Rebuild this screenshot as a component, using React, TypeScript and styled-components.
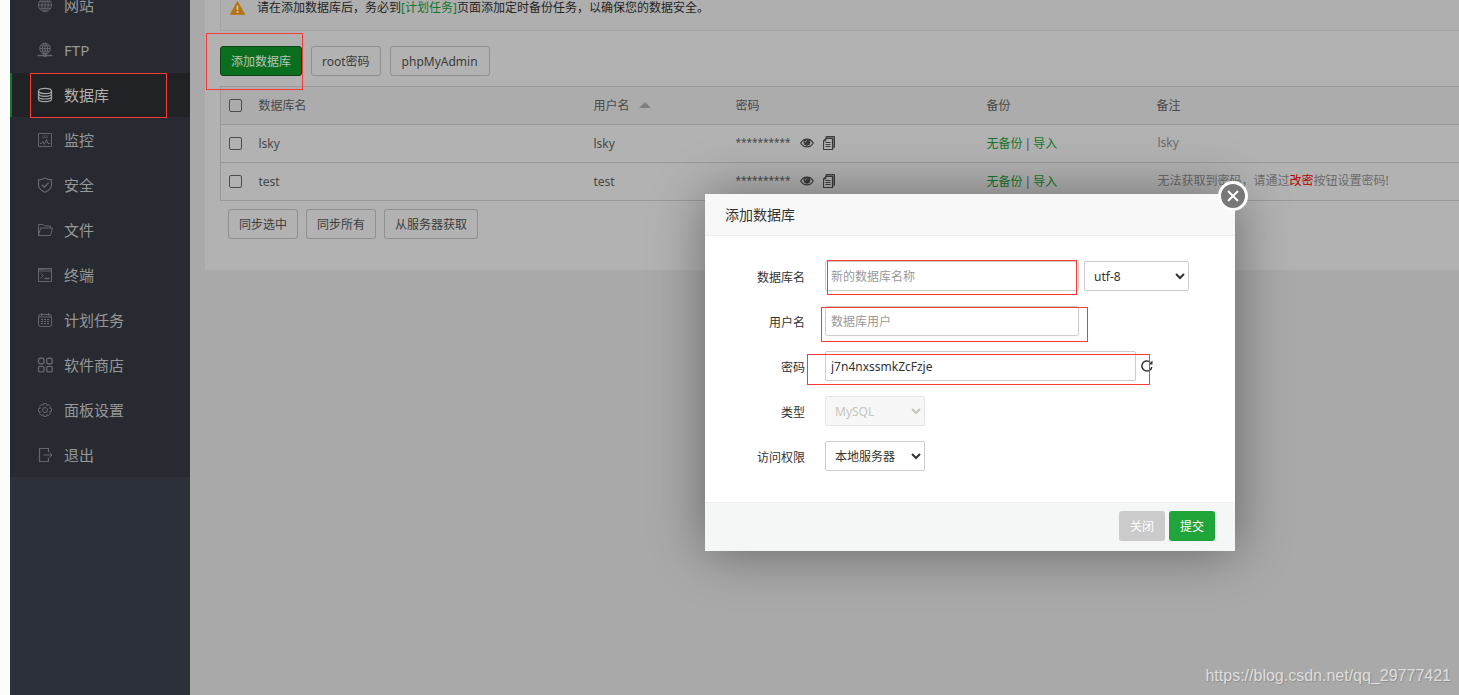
import React from 'react';
import styled, { createGlobalStyle, css } from 'styled-components';

const latinFirst = '"Noto Sans", "Noto Sans CJK SC", sans-serif';

const GlobalStyle = createGlobalStyle`
  * { box-sizing: border-box; }
  body {
    margin: 0;
    background: #fcfcfc;
    color: #484848;
    font: 12px/20px ${latinFirst};
  }
  button, input, select { font: inherit; }
  a { text-decoration: none; }
`;

const Page = styled.div`
  position: relative;
  display: flex;
  min-height: 100vh;
  margin-left: 10px;
  background: #a9a9a9;
  overflow: hidden;
`;

const Sidebar = styled.nav`
  flex: 0 0 180px;
  background: #2c3038;
`;

/* The page is scrolled, so the first entry is cut by the top of the window. */
const Menu = styled.ul`
  display: flex;
  flex-direction: column;
  gap: 1px;
  margin: -17px 0 0;
  padding: 0;
  list-style: none;
  background: #272b31;
`;

const MenuItem = styled.li`
  position: relative;
`;

const MenuLink = styled.a<{ $active?: boolean }>`
  display: flex;
  align-items: center;
  gap: 11px;
  height: 44px;
  padding-left: 25px;
  border-left: 2px solid transparent;
  color: #969798;
  font-size: 15px;
  svg { width: 16px; height: 16px; color: #63666a; }
  ${(p) => p.$active && css`
    border-left-color: #14782a;
    background: #202226;
    color: #b3b3b3;
    svg { color: #a6a7a8; }
  `}
`;

/* Red frame laid over a control to point it out. */
const Mark = styled.span<{ $inset: string }>`
  position: absolute;
  inset: ${(p) => p.$inset};
  border: 1px solid #f93a37;
  pointer-events: none;
`;

const Main = styled.main`
  flex: 1;
  min-width: 0;
  padding-left: 15px;
`;

const Panel = styled.section`
  padding: 0 0 31px 15px;
  background: #b2b2b2;
`;

const Notice = styled.div`
  display: flex;
  align-items: center;
  gap: 12px;
  height: 46px;
  margin-top: -15px;
  padding-left: 9px;
  border: 1px solid #a5a5a5;
  border-right: 0;
  background: #afafaf;
  color: #242424;
  p { margin: 0; }
`;

const GreenLink = styled.a`
  color: #14752a;
`;

const ButtonRow = styled.div<{ $indent?: boolean }>`
  display: flex;
  gap: ${(p) => (p.$indent ? 8 : 9)}px;
  padding: ${(p) => (p.$indent ? '8px 0 0 8px' : '15px 0 10px')};
`;

const Anchor = styled.div`
  position: relative;
`;

const Button = styled.button<{ $primary?: boolean; $latin?: boolean }>`
  height: 30px;
  padding: 2px ${(p) => (p.$latin ? 11 : 10)}px 0;
  border: 1px solid ${(p) => (p.$primary ? '#0b4516' : '#8f8f8f')};
  border-radius: 3px;
  background: ${(p) => (p.$primary ? '#0b6e1e' : '#b2b2b2')};
  color: ${(p) => (p.$primary ? '#b8c5ba' : '#3c3c3c')};
  white-space: nowrap;
`;

const Table = styled.table`
  width: 100%;
  table-layout: fixed;
  border-collapse: collapse;
  border-left: 1px solid #999;
  text-align: left;
  tr { height: 38px; border-top: 1px solid #999; }
  tbody tr:last-child { border-bottom: 1px solid #999; }
  thead { background: #acacac; }
  th, td { padding: 0 8px; font-weight: 400; vertical-align: middle; }
`;

const Column = styled.col<{ $width?: number }>`
  width: ${(p) => (p.$width ? `${p.$width}px` : 'auto')};
`;

const Checkbox = styled.input`
  display: block;
  width: 13px;
  height: 13px;
  margin: 0;
  appearance: none;
  border: 1px solid #4c4c4c;
  border-radius: 2px;
`;

const SortMark = styled.span`
  display: inline-block;
  margin-left: 9px;
  border: 6px solid transparent;
  border-top: 0;
  border-bottom: 6px solid #808080;
  vertical-align: 2px;
`;

const Secret = styled.div`
  display: flex;
  align-items: center;
  padding-bottom: 2px;
  svg { color: #3c3c3c; }
`;

const Stars = styled.span`
  width: 64px;
  padding-bottom: 2px;
  font-size: 10px;
`;

const Separator = styled.span`
  margin: 0 2px;
  color: #3a4c5a;
`;

const IconButton = styled.button`
  display: flex;
  padding: 0;
  border: 0;
  background: none;
  color: #333;
`;

const CopyButton = styled(IconButton)`
  margin-left: 9px;
`;

const Remark = styled.div`
  padding: 0 0 2px 1px;
  color: #6b6b6b;
  a { color: #b80000; }
`;

const Dialog = styled.form`
  position: absolute;
  top: 194px;
  right: 224px;
  width: 530px;
  background: #fff;
  box-shadow: 1px 1px 50px rgba(0, 0, 0, 0.4);
  color: #333;
`;

const DialogTitle = styled.h2`
  height: 42px;
  margin: 0;
  padding-left: 20px;
  border-bottom: 1px solid #eee;
  background: #f8f8f8;
  font-size: 14px;
  font-weight: 400;
  line-height: 42px;
`;

const CloseButton = styled.button`
  position: absolute;
  top: -13px;
  right: -13px;
  display: grid;
  place-items: center;
  width: 30px;
  height: 30px;
  padding: 0;
  border: 3px solid #fff;
  border-radius: 50%;
  background: #787878;
  color: #fff;
`;

const Fields = styled.div`
  display: flex;
  flex-direction: column;
  gap: 15px;
  padding: 25px 0 31px;
`;

const Field = styled.div`
  display: flex;
  align-items: center;
  gap: 5px;
`;

const Label = styled.label`
  width: 100px;
  margin-right: 15px;
  padding-top: 4px;
  text-align: right;
`;

const Input = styled.input<{ $wide?: boolean }>`
  display: block;
  width: ${(p) => (p.$wide ? 311 : 254)}px;
  height: 30px;
  padding: 0 5px;
  border: 1px solid #ccc;
  border-radius: 2px;
  background: #fff;
  color: #333;
  outline: 0;
  &::placeholder { color: #999; opacity: 1; }
`;

const Select = styled.select<{ $wide?: boolean }>`
  width: ${(p) => (p.$wide ? 105 : 100)}px;
  height: 30px;
  padding: 0 0 0 5px;
  border: 1px solid #ccc;
  border-radius: 2px;
  background: #fff;
  color: #333;
  &:disabled { border-color: #e5e5e5; background: #f7f7f7; color: #c6c6bd; opacity: 1; }
`;

const DialogFooter = styled.footer`
  display: flex;
  justify-content: flex-end;
  gap: 4px;
  padding: 8px 20px 10px;
  border-top: 1px solid #edf0ee;
  background: #f5f7f6;
`;

const DialogButton = styled.button<{ $primary?: boolean }>`
  width: 46px;
  height: 30px;
  padding: 2px 0 0;
  border: 0;
  border-radius: 3px;
  background: ${(p) => (p.$primary ? '#20a53a' : '#cbcbcb')};
  color: #fff;
`;

const Watermark = styled.div`
  position: absolute;
  right: 8px;
  bottom: 9px;
  color: #dedede;
  font: 16px/20px "Liberation Sans", Arial, sans-serif;
  text-shadow: 1px 1px 1px #8c8c8c;
`;

const Icon = ({ children, size = 16 }: { children: React.ReactNode; size?: number }) => (
  <svg width={size} height={size} viewBox="0 0 16 16" fill="none" stroke="currentColor" aria-hidden="true">
    {children}
  </svg>
);

const menu = [
  { text: '网站', icon: <><circle cx="8" cy="8" r="6.5" /><ellipse cx="8" cy="8" rx="3.2" ry="6.5" /><path d="M8 1.5v13M1.5 8h13M2.5 4.7h11M2.5 11.3h11" /></> },
  { text: 'FTP', icon: <><circle cx="8" cy="6.5" r="5.3" /><ellipse cx="8" cy="6.5" rx="2.6" ry="5.3" /><path d="M8 1.2v12M2.7 6.5h10.6M3.5 3.9h9M3.5 9.1h9" /><path d="M.5 13.500h15" strokeWidth="1.500" /><path d="M6 13.500h4" strokeWidth="2.500" /></> },
  { text: '数据库', active: true, icon: <g strokeWidth="1.200"><ellipse cx="8" cy="4" rx="6.5" ry="2.6" /><path d="M1.5 4v8c0 1.4 2.9 2.6 6.5 2.6s6.5-1.2 6.5-2.6V4M1.5 6.8c0 1.4 2.9 2.5 6.5 2.5s6.5-1.1 6.5-2.5M1.5 9.5c0 1.4 2.9 2.5 6.5 2.5s6.5-1.1 6.5-2.5" /></g> },
  { text: '监控', icon: <><path d="M1.5 1.5h13v13h-13z" /><path d="M5 4h6M5 5.500h6" opacity=".5" /><path d="M3 11.500h1.500L6 9.500l1.500 3 2-5 1.500 4h2" /></> },
  { text: '安全', icon: <g strokeWidth="1.200"><path d="M8 1C6 2.300 4 2.800 1.500 2.800V8c0 3.500 2.800 5.700 6.500 7.300 3.700-1.600 6.500-3.800 6.500-7.300V2.800C12 2.800 10 2.300 8 1z" /><path d="M4.800 7.700l2.500 2.500 4.200-4.400" strokeWidth="1.500" /></g> },
  { text: '文件', icon: <><path d="M1.500 13.500v-11h4.500l1.500 1.500h6v2M1.500 13.500l2.200-7.500h11.800l-2 7.500z" /></> },
  { text: '终端', icon: <><path d="M1.500 1.500h13v13h-13zM1.500 4h13M3.500 5.800L6.300 8.600 3.500 11.400" /><path d="M7.500 11.500h5M1.500 2h6" strokeWidth="1.500" /><path d="M8.500 2.700h1M10.500 2.700h1M12.500 2.700h1" /></> },
  { text: '计划任务', icon: <><rect x="1.500" y="2.500" width="13" height="12" rx="2" /><path d="M4.500 1v3M11.500 1v3M1.500 5h13" /><path d="M4 7.500h8M4 9.500h8M4 11.500h8" strokeDasharray="2 1" /></> },
  { text: '软件商店', icon: <g strokeWidth="1.400"><rect x="1.500" y="1.200" width="5.500" height="5.500" rx="1.500" /><rect x="9.700" y="1.200" width="5.500" height="5.500" rx="1.500" /><rect x="1.500" y="9.400" width="5.500" height="5.500" rx="1.500" /><rect x="9.700" y="9.400" width="5.500" height="5.500" rx="1.500" /></g> },
  { text: '面板设置', icon: <><circle cx="8" cy="8" r="2.500" /><path d="M6.700 1.500h2.600l.5 1.800 1.800-.8 1.900 1.900-.8 1.800 1.800.5v2.600l-1.800.5.8 1.800-1.900 1.900-1.800-.8-.5 1.800H6.700l-.5-1.800-1.800.8-1.900-1.900.8-1.800-1.800-.5V6.700l1.800-.5-.8-1.800 1.900-1.900 1.800.8z" /></> },
  { text: '退出', icon: <><path d="M11.500 5V1.500h-9v13h9V11M6.500 8H15" strokeWidth="1.200" /><path d="M12.500 5.500L15 8l-2.500 2.500" /></> },
];

const rows = [
  { name: 'lsky', remark: 'lsky' as React.ReactNode },
  { name: 'test', remark: <>无法获取到密码，请通过<a href="#password">改密</a>按钮设置密码!</> },
];

export default function App() {
  return (
    <Page>
      <GlobalStyle />
      <Sidebar>
        <Menu>
          {menu.map((item) => (
            <MenuItem key={item.text}>
              <MenuLink href="#" $active={item.active}>
                <Icon>{item.icon}</Icon>
                {item.text}
              </MenuLink>
              {item.active && <Mark $inset="0 23px -1px 20px" />}
            </MenuItem>
          ))}
        </Menu>
      </Sidebar>

      <Main>
        <Panel>
          <Notice>
            <svg width="15" height="14" viewBox="0 0 15 14" aria-hidden="true">
              <path d="M7.500.5L14.500 13.300H.5z" fill="#b57410" stroke="#b57410" strokeLinejoin="round" />
              <path d="M7.500 4.500v4.500M7.500 10v2" stroke="#d0c0a0" strokeWidth="1.800" />
            </svg>
            <p>请在添加数据库后，务必到<GreenLink href="#cron">[计划任务]</GreenLink>页面添加定时备份任务，以确保您的数据安全。</p>
          </Notice>

          <ButtonRow>
            <Anchor>
              <Button type="button" $primary>添加数据库</Button>
              <Mark $inset="-13px -1px -14px -14px" />
            </Anchor>
            <Button type="button">root密码</Button>
            <Button type="button" $latin>phpMyAdmin</Button>
          </ButtonRow>

          <Table>
            <colgroup>
              <Column $width={30} />
              <Column $width={335} />
              <Column $width={142} />
              <Column $width={251} />
              <Column $width={170} />
              <Column />
            </colgroup>
            <thead>
              <tr>
                <th><Checkbox type="checkbox" aria-label="全选" /></th>
                <th>数据库名</th>
                <th>用户名<SortMark /></th>
                <th>密码</th>
                <th>备份</th>
                <th>备注</th>
              </tr>
            </thead>
            <tbody>
              {rows.map((row) => (
                <tr key={row.name}>
                  <td><Checkbox type="checkbox" aria-label={row.name} /></td>
                  <td>{row.name}</td>
                  <td>{row.name}</td>
                  <td>
                    <Secret>
                      <Stars>**********</Stars>
                      <IconButton type="button" aria-label="显示密码">
                        <svg width="14" height="12" viewBox="0 0 14 12" fill="none" stroke="currentColor">
                          <path d="M.8 6C3.500.8 10.500.8 13.200 6 10.500 11.200 3.500 11.200.8 6z" strokeWidth="1.300" />
                          <circle cx="7" cy="5.300" r="3" fill="currentColor" />
                          <path d="M5.500 5.300c0-1 .6-1.600 1.500-1.600" stroke="#b2b2b2" strokeWidth=".9" />
                        </svg>
                      </IconButton>
                      <CopyButton type="button" aria-label="复制密码">
                        <svg width="12" height="14" viewBox="0 0 12 14" fill="none" stroke="currentColor">
                          <path d="M3 2.500V.5h8.500v10.500l-1.500 1.500" fill="#6e6e6e" />
                          <path d="M3 2.500h6.500v11H.5V5z" fill="#b2b2b2" strokeWidth="1.200" />
                          <path d="M3 2.500V5H.5z" fill="currentColor" opacity=".7" />
                          <path d="M2.500 6.500h5M2.500 8.500h5M2.500 10.500h5" />
                        </svg>
                      </CopyButton>
                    </Secret>
                  </td>
                  <td>
                    <GreenLink href="#backup">无备份</GreenLink>
                    <Separator>|</Separator>
                    <GreenLink href="#import">导入</GreenLink>
                  </td>
                  <td><Remark>{row.remark}</Remark></td>
                </tr>
              ))}
            </tbody>
          </Table>

          <ButtonRow $indent>
            <Button type="button">同步选中</Button>
            <Button type="button">同步所有</Button>
            <Button type="button">从服务器获取</Button>
          </ButtonRow>
        </Panel>
      </Main>

      <Dialog role="dialog" aria-labelledby="dialog-title" onSubmit={(e) => e.preventDefault()}>
        <DialogTitle id="dialog-title">添加数据库</DialogTitle>
        <CloseButton type="button" aria-label="关闭窗口">
          <svg width="12" height="12" viewBox="0 0 12 12" stroke="currentColor" strokeWidth="2">
            <path d="M1 1l10 10M11 1L1 11" />
          </svg>
        </CloseButton>
        <Fields>
          <Field>
            <Label htmlFor="db-name">数据库名</Label>
            <Anchor>
              <Input id="db-name" placeholder="新的数据库名称" />
              <Mark $inset="-1px 2px -4px 2px" />
            </Anchor>
            <Select $wide aria-label="编码" defaultValue="utf-8">
              <option>utf-8</option>
            </Select>
          </Field>
          <Field>
            <Label htmlFor="db-user">用户名</Label>
            <Anchor>
              <Input id="db-user" placeholder="数据库用户" />
              <Mark $inset="1px -9px -6px -4px" />
            </Anchor>
          </Field>
          <Field>
            <Label htmlFor="db-password">密码</Label>
            <Anchor>
              <Input id="db-password" $wide defaultValue="j7n4nxssmkZcFzje" />
              <Mark $inset="3px -14px -4px -18px" />
            </Anchor>
            <IconButton type="button" aria-label="随机密码">
              <svg width="12" height="12" viewBox="0 0 12 12" fill="none" stroke="currentColor" strokeWidth="1.500">
                <path d="M9.300 2.300A5 5 0 1 0 10.800 7" />
                <path d="M11.500.5v4H7.500z" fill="currentColor" stroke="none" />
              </svg>
            </IconButton>
          </Field>
          <Field>
            <Label htmlFor="db-type">类型</Label>
            <Select id="db-type" disabled defaultValue="MySQL">
              <option>MySQL</option>
            </Select>
          </Field>
          <Field>
            <Label htmlFor="db-access">访问权限</Label>
            <Select id="db-access" defaultValue="本地服务器">
              <option>本地服务器</option>
            </Select>
          </Field>
        </Fields>
        <DialogFooter>
          <DialogButton type="button">关闭</DialogButton>
          <DialogButton type="submit" $primary>提交</DialogButton>
        </DialogFooter>
      </Dialog>

      <Watermark>https://blog.csdn.net/qq_29777421</Watermark>
    </Page>
  );
}
